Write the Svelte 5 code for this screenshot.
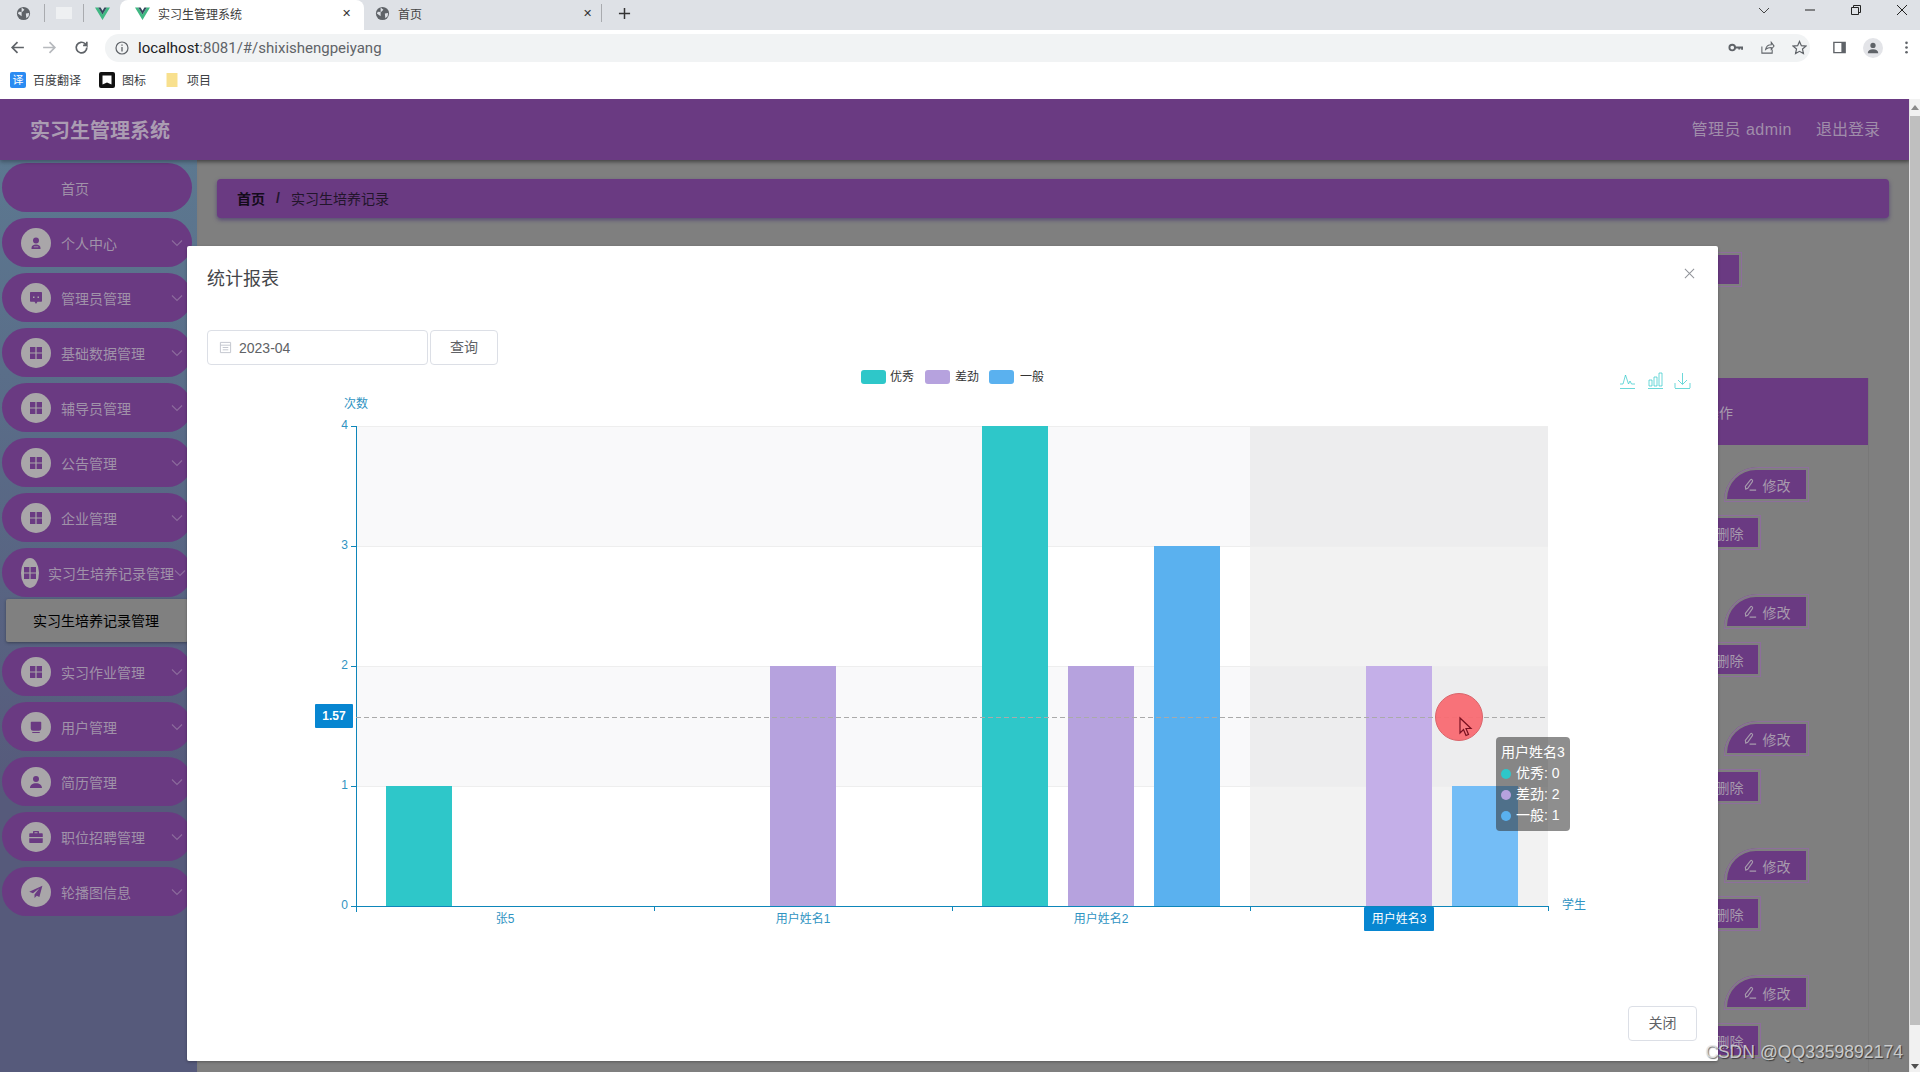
<script lang="ts">
  const navItems = [
    { label: "首页", icon: "" },
    { label: "个人中心", icon: "user" },
    { label: "管理员管理", icon: "chat" },
    { label: "基础数据管理", icon: "grid" },
    { label: "辅导员管理", icon: "grid" },
    { label: "公告管理", icon: "grid" },
    { label: "企业管理", icon: "grid" },
    { label: "实习生培养记录管理", icon: "grid", open: true, sub: "实习生培养记录管理" },
    { label: "实习作业管理", icon: "grid" },
    { label: "用户管理", icon: "cup" },
    { label: "简历管理", icon: "person" },
    { label: "职位招聘管理", icon: "case" },
    { label: "轮播图信息", icon: "plane" }
  ];

  const iconPaths = {
    user: "M12 4.5a4 4 0 1 1 0 8 4 4 0 0 1 0-8zM6 20v-1.5c0-2.6 2.4-4.5 6-4.5s6 1.9 6 4.5V20zM9 17.5h6v-1H9z",
    chat: "M5 4h14a1 1 0 0 1 1 1v11a1 1 0 0 1-1 1h-5l-2 3-2-3H5a1 1 0 0 1-1-1V5a1 1 0 0 1 1-1zM8 10v2h2v-2zM14 10v2h2v-2z",
    grid: "M4 4h7.200v7.200H4zM12.800 4H20v7.200h-7.200zM4 12.800h7.200V20H4zM12.800 12.800H20V20h-7.200z",
    cup: "M6 5h12a1 1 0 0 1 1 1v8a3 3 0 0 1-3 3H8a3 3 0 0 1-3-3V6a1 1 0 0 1 1-1zM7 18.5h10V20H7z",
    person: "M12 4a4 4 0 1 1 0 8 4 4 0 0 1 0-8zM4 20c0-4 3.5-6.5 8-6.5s8 2.500 8 6.500z",
    case: "M9 4h6a1 1 0 0 1 1 1v2h4a1 1 0 0 1 1 1v4H3V8a1 1 0 0 1 1-1h4V5a1 1 0 0 1 1-1zM10 5.500V7h4V5.500zM3 13.500h18V19a1 1 0 0 1-1 1H4a1 1 0 0 1-1-1z",
    plane: "M20.500 3.500 3 11.500l5 2.200 8.500-6.700-6.500 8.200V20l3-3 3.500 1.600z"
  };

  // data of the bar chart, in the same units as the y axis
  const categories = ["张5", "用户姓名1", "用户姓名2", "用户姓名3"];
  const series = [
    { name: "优秀", color: "#2ec7c9", hover: "#2ec7c9", values: [1, 0, 4, 0] },
    { name: "差劲", color: "#b6a2de", hover: "#c4afe8", values: [0, 2, 2, 2] },
    { name: "一般", color: "#5ab1ef", hover: "#74bdf6", values: [0, 0, 3, 1] }
  ];
  const activeIndex = 3;
  const axisX = 356;
  const axisEnd = 1548;
  const zeroY = 906;
  const unit = 120;
  const catWidth = (axisEnd - axisX) / categories.length;
  const bars = series.flatMap((s, si) =>
    s.values.map((v, i) => ({
      x: axisX + catWidth * (i + 0.5) + (si - 1) * 86 - 33,
      y: zeroY - v * unit,
      h: v * unit,
      fill: i === activeIndex ? s.hover : s.color
    })).filter((b) => b.h > 0)
  );
  const tooltipRows = [
    { name: "优秀", value: 0, color: "#2ec7c9" },
    { name: "差劲", value: 2, color: "#b6a2de" },
    { name: "一般", value: 1, color: "#5ab1ef" }
  ];
  const rows = [0, 1, 2, 3, 4];
</script>

{#snippet globe()}
  <svg class="fav" viewBox="0 0 16 16"><circle cx="8" cy="8" r="7" fill="#5f6368" /><path d="M6 1.500 9 4 6.500 6.500 3 6l-1 2 4 3v3.500M10.500 8l3.500-.5-.5 3.500-2.500 2z" fill="#dee1e6" /></svg>
{/snippet}
{#snippet vue()}
  <svg class="fav" viewBox="0 0 16 16"><path d="M0 1.500h3.500L8 9l4.500-7.500H16L8 15z" fill="#41b883" /><path d="M3.500 1.500h2.500L8 5l2-3.500h2.500L8 9z" fill="#35495e" /></svg>
{/snippet}
{#snippet pencil()}
  <svg class="pen" viewBox="0 0 16 16"><path d="M3 13 2.500 10 8 3c1-1 3 .5 2 2L5 12zM7 14h7" fill="none" stroke="#a79bad" stroke-width="1.200" /></svg>
{/snippet}

<div class="browser">
  <div class="tabs">
    <div class="pinned first">{@render globe()}</div>
    <div class="pinned sep"><span class="blank"></span></div>
    <div class="pinned sep last">{@render vue()}</div>
    <div class="tab active">
      {@render vue()}
      <span class="tab-title">实习生管理系统</span>
      <span class="tab-x">✕</span>
    </div>
    <div class="tab second">
      {@render globe()}
      <span class="tab-title">首页</span>
      <span class="tab-x">✕</span>
    </div>
    <svg class="plus" viewBox="0 0 14 14"><path d="M7 1v12M1 7h12" stroke="#333" stroke-width="1.600" /></svg>
    <div class="win">
      <svg viewBox="0 0 12 12"><path d="M1 4l5 5 5-5" fill="none" stroke="#444" /></svg>
      <svg viewBox="0 0 12 12"><path d="M1 6h10" stroke="#222" /></svg>
      <svg viewBox="0 0 12 12"><path d="M1.500 3.500h7v7h-7zM3.500 3.500v-2h7v7h-2" fill="none" stroke="#222" /></svg>
      <svg viewBox="0 0 12 12"><path d="M1 1l10 10M11 1 1 11" stroke="#222" /></svg>
    </div>
  </div>

  <div class="toolbar">
    <svg class="nav-ico" viewBox="0 0 16 16"><path d="M14 8H3M8 3 3 8l5 5" fill="none" stroke="#5f6368" stroke-width="1.600" /></svg>
    <svg class="nav-ico" viewBox="0 0 16 16"><path d="M2 8h11M8 3l5 5-5 5" fill="none" stroke="#b6b9bd" stroke-width="1.600" /></svg>
    <svg class="nav-ico" viewBox="0 0 16 16"><path d="M13 8a5 5 0 1 1-1.500-3.500L13 6V2.500M13 6H9.500" fill="none" stroke="#5f6368" stroke-width="1.600" /></svg>
    <div class="omnibox">
      <svg class="info" viewBox="0 0 14 14"><circle cx="7" cy="7" r="6" fill="none" stroke="#5f6368" stroke-width="1.200" /><path d="M7 6v4.500M7 3.500v1.300" stroke="#5f6368" stroke-width="1.300" /></svg>
      <span class="url"><b>localhost</b>:8081/#/shixishengpeiyang</span>
      <div class="omni-right">
        <svg viewBox="0 0 16 16"><circle cx="4.500" cy="8" r="3" fill="none" stroke="#5f6368" stroke-width="2" /><path d="M7.500 8H15v2.500M12 8v2" fill="none" stroke="#5f6368" stroke-width="2" /></svg>
        <svg viewBox="0 0 16 16"><path d="M2 7v7h11V10M6 10c.5-3 3-5 6-5V2.500L15 6.500 12 10V8c-2.500 0-4.500.5-6 2z" fill="none" stroke="#5f6368" stroke-width="1.100" /></svg>
        <svg viewBox="0 0 16 16"><path d="M8 1.500l2 4.500 4.800.5-3.600 3.200 1 4.800L8 12.100l-4.200 2.400 1-4.800L1.200 6.500 6 6z" fill="none" stroke="#5f6368" stroke-width="1.300" /></svg>
      </div>
    </div>
    <div class="tool-right">
      <svg viewBox="0 0 16 16"><path d="M2 2.500h12v11H2z" fill="none" stroke="#5f6368" stroke-width="1.500" /><path d="M10 2.500h4v11h-4z" fill="#5f6368" /></svg>
      <span class="avatar"><svg viewBox="0 0 16 16"><circle cx="8" cy="5" r="3" fill="#5f6368" /><path d="M2 14c0-3 2.500-4.500 6-4.500s6 1.500 6 4.500z" fill="#5f6368" /></svg></span>
      <svg viewBox="0 0 16 16"><circle cx="8" cy="3" r="1.400" fill="#5f6368" /><circle cx="8" cy="8" r="1.400" fill="#5f6368" /><circle cx="8" cy="13" r="1.400" fill="#5f6368" /></svg>
    </div>
  </div>

  <div class="bookmarks">
    <span class="bm"><span class="bm-fanyi">译</span>百度翻译</span>
    <span class="bm"><svg class="bm-ico" viewBox="0 0 16 16"><rect width="16" height="16" rx="2" fill="#111" /><path d="M3.500 3.500h9v9L8 10.500l-4.500 2z" fill="#fff" /></svg>图标</span>
    <span class="bm"><svg class="bm-ico" viewBox="0 0 16 16"><path d="M2.500 1h11v14h-11z" fill="#f8e08e" /></svg>项目</span>
  </div>
</div>

<div class="page">
  <div class="app">
    <header class="topbar">
      <span class="logo">实习生管理系统</span>
      <div class="user">
        <span class="who">管理员 admin</span>
        <span>退出登录</span>
      </div>
    </header>

    <div class="body">
      <aside class="sidebar">
        {#each navItems as item}
          <div class="nav-item" class:open={item.open}>
            {#if item.icon}
              <span class="nav-icon">
                <svg viewBox="0 0 24 24"><path d={iconPaths[item.icon]} fill="#6a3a82" fill-rule="evenodd" /></svg>
              </span>
            {:else}
              <span class="nav-icon none"></span>
            {/if}
            <span class="nav-label">{item.label}</span>
            {#if item.icon}
              <svg class="chev" viewBox="0 0 12 8"><path d="M1 1.500l5 5 5-5" fill="none" stroke="#8b6a9c" stroke-width="1.200" /></svg>
            {/if}
          </div>
          {#if item.sub}
            <div class="nav-sub">{item.sub}</div>
          {/if}
        {/each}
      </aside>

      <main class="main">
        <nav class="crumb">
          <b>首页</b>
          <span class="slash">/</span>
          <span>实习生培养记录</span>
        </nav>
        <div class="actions"><span class="act-btn plain"></span></div>
        <div class="table">
          <div class="thead"><span class="th-op">操作</span></div>
          {#each rows as r (r)}
            <div class="row">
              <span class="act-btn edit">{@render pencil()}修改</span>
              <span class="act-btn del">删除</span>
            </div>
          {/each}
        </div>
      </main>
    </div>
  </div>

  <div class="scrollbar">
    <svg class="arrow up" viewBox="0 0 8 5"><path d="M0 5h8L4 0z" fill="#8a8a8a" /></svg>
    <div class="thumb"></div>
    <svg class="arrow" viewBox="0 0 8 5"><path d="M0 0h8L4 5z" fill="#505050" /></svg>
  </div>

  <section class="dialog">
    <div class="dialog-head">
      <span class="dialog-title">统计报表</span>
      <svg class="dialog-x" viewBox="0 0 12 12"><path d="M1 1l10 10M11 1 1 11" stroke="#909399" stroke-width="1.100" /></svg>
    </div>

    <div class="query">
      <div class="date-input">
        <svg viewBox="0 0 14 14"><path d="M1.500 1.500h11v11h-11zM1.500 4.500h11M4 7h6M4 9.500h6" fill="none" stroke="#c0c4cc" /></svg>
        <span>2023-04</span>
      </div>
      <button class="btn">查询</button>
    </div>

    <div class="chart">
      <svg class="plot" viewBox="187 365 1531 622" width="1531" height="622">
        <!-- legend -->
        <rect x="861" y="370" width="25" height="14" rx="3" fill="#2ec7c9" />
        <text x="890" y="381" class="legend">优秀</text>
        <rect x="925" y="370" width="25" height="14" rx="3" fill="#b6a2de" />
        <text x="955" y="381" class="legend">差劲</text>
        <rect x="989" y="370" width="25" height="14" rx="3" fill="#5ab1ef" />
        <text x="1020" y="381" class="legend">一般</text>

        <!-- toolbox -->
        <g fill="none" stroke="#2ec7c9" stroke-opacity="0.7" stroke-width="1">
          <path d="M1620 388.500h15M1620 384h3l2.500-9 3 9 1.500-3 1.500 3h3.500" />
          <path d="M1648 388.500h15M1649 380h3v6h-3zM1654 377h3v9h-3zM1659 373h3v13h-3z" />
          <path d="M1675 388.500h15M1675 383v5M1690 383v5M1682.500 373v11M1678 380l4.500 4.500 4.500-4.500" />
        </g>

        <!-- split areas and lines -->
        <rect x={axisX} y="426" width={axisEnd - axisX} height="120" fill="#f9f9fa" />
        <rect x={axisX} y="666" width={axisEnd - axisX} height="120" fill="#f9f9fa" />
        <rect x="1250" y="426" width="298" height="480" fill="#c8c8c8" fill-opacity="0.24" />
        {#each [4, 3, 2, 1] as v}
          <line x1={axisX} x2={axisEnd} y1={zeroY - v * unit + 0.5} y2={zeroY - v * unit + 0.5} stroke="#eeeeee" />
        {/each}

        <!-- bars -->
        {#each bars as b}
          <rect x={b.x} y={b.y} width="66" height={b.h} fill={b.fill} />
        {/each}

        <!-- axes -->
        <path d="M356.500 426v486M351 426.500h6M351 546.500h6M351 666.500h6M351 786.500h6M351 906.500h6" stroke="#0e86ba" fill="none" />
        <path d="M356 906.500h1192.500M654.500 906v5M952.500 906v5M1250.500 906v5M1548.500 906v5" stroke="#0e86ba" fill="none" />
        {#each [4, 3, 2, 1, 0] as v}
          <text x="348" y={zeroY - v * unit + 3} text-anchor="end" class="tick">{v}</text>
        {/each}
        <text x="356" y="408" text-anchor="middle" class="tick">次数</text>
        <text x="1562" y="909" class="tick">学生</text>
        {#each categories as c, i}
          {#if i !== activeIndex}
            <text x={axisX + catWidth * (i + 0.5)} y="923" text-anchor="middle" class="tick">{c}</text>
          {/if}
        {/each}

        <!-- crosshair -->
        <line x1="356" x2="1548" y1="717.500" y2="717.500" stroke="#aaaaaa" stroke-dasharray="5 3" />
        <rect x="315" y="704" width="38" height="24" rx="1" fill="#0786d1" />
        <text x="334" y="720" text-anchor="middle" class="pointer bold">1.57</text>
        <rect x="1364" y="907" width="70" height="24" rx="1" fill="#0786d1" />
        <text x="1399" y="923" text-anchor="middle" class="pointer">用户姓名3</text>

        <!-- click marker of the screen recorder -->
        <circle cx="1459" cy="717" r="23.500" fill="#f96c72" fill-opacity="0.95" stroke="#d9656b" />
        <path d="M1460 718v15l3.500-3.500 2.500 6 2.500-1-2.500-6h5z" fill="#f87a80" stroke="#7a1020" stroke-width="1.200" />
      </svg>

      <div class="tooltip">
        <div>用户姓名3</div>
        {#each tooltipRows as t}
          <div class="tip-row"><span class="dot" style="background: {t.color}"></span>{t.name}: {t.value}</div>
        {/each}
      </div>
    </div>

    <div class="dialog-foot">
      <button class="btn close">关闭</button>
    </div>
  </section>

  <span class="watermark">CSDN @QQ3359892174</span>
</div>

<style>
  :global(body) {
    margin: 0;
    overflow: hidden;
    font-family: "Liberation Sans", "Noto Sans CJK SC", sans-serif;
  }

  /* browser chrome */
  .browser {
    height: 99px;
    background: #fff;
    display: flex;
    flex-direction: column;
  }

  .tabs {
    height: 30px;
    background: #dee1e6;
    display: flex;
    align-items: center;
  }

  .fav {
    width: 15px;
    height: 15px;
    flex: none;
  }

  .pinned {
    width: 39px;
    height: 18px;
    margin-bottom: 4px;
    display: flex;
    align-items: center;
    justify-content: center;
    box-sizing: border-box;
  }

  .pinned.first {
    width: 44px;
    padding-left: 2px;
  }

  .pinned.last {
    width: 37px;
  }

  .pinned.sep {
    border-left: 1px solid #a9abaf;
  }

  .blank {
    width: 16px;
    height: 12px;
    background: #eef0f2;
  }

  .tab {
    display: flex;
    align-items: center;
    font-size: 12px;
    color: #444;
    box-sizing: border-box;
  }

  .tab.active {
    width: 244px;
    height: 30px;
    padding: 0 13px 4px 15px;
    background: #fff;
    border-radius: 8px 8px 0 0;
    color: #3c3c3c;
  }

  .tab.second {
    width: 238px;
    height: 18px;
    margin-bottom: 4px;
    padding: 0 9px 0 11px;
    border-right: 1px solid #a9abaf;
  }

  .tab-title {
    margin-left: 8px;
    flex: 1;
  }

  .tab-x {
    font-size: 11px;
    color: #333;
  }

  .plus {
    width: 13px;
    height: 13px;
    margin: 0 0 4px 16px;
  }

  .win {
    margin: 0 0 10px auto;
    display: flex;
    align-items: center;
    gap: 34px;
    padding-right: 12px;
  }

  .win svg {
    width: 12px;
    height: 12px;
  }

  .toolbar {
    height: 35px;
    display: flex;
    align-items: center;
    padding-left: 9px;
    gap: 15px;
  }

  .nav-ico {
    width: 17px;
    height: 17px;
    flex: none;
  }

  .omnibox {
    width: 1705px;
    height: 28px;
    background: #f1f3f4;
    border-radius: 14px;
    display: flex;
    align-items: center;
    padding: 0 3px 0 10px;
    box-sizing: border-box;
  }

  .info {
    width: 14px;
    height: 14px;
  }

  .url {
    margin-left: 9px;
    font-size: 15px;
    color: #5f6368;
    font-family: Roboto, "Liberation Sans", sans-serif;
  }

  .url b {
    font-weight: 400;
    color: #202124;
  }

  .omni-right {
    margin-left: auto;
    display: flex;
    gap: 17px;
  }

  .omni-right svg {
    width: 15px;
    height: 15px;
  }

  .tool-right {
    display: flex;
    align-items: center;
    gap: 16px;
    margin-left: 7px;
  }

  .tool-right > svg {
    width: 15px;
    height: 15px;
  }

  .avatar {
    width: 20px;
    height: 20px;
    border-radius: 50%;
    background: #e3e4e8;
    display: flex;
    align-items: center;
    justify-content: center;
  }

  .avatar svg {
    width: 14px;
    height: 14px;
  }

  .bookmarks {
    flex: 1;
    display: flex;
    align-items: center;
    padding: 0 0 5px 10px;
    gap: 18px;
    font-size: 12px;
    color: #3c4043;
  }

  .bm {
    display: flex;
    align-items: center;
    gap: 7px;
  }

  .bm-fanyi {
    width: 16px;
    height: 16px;
    background: #2a8bf2;
    color: #fff;
    border-radius: 2px;
    font-size: 11px;
    line-height: 16px;
    text-align: center;
  }

  .bm-ico {
    width: 16px;
    height: 16px;
  }

  /* dimmed page below the dialog */
  .page {
    position: relative;
    height: 973px;
    display: flex;
    overflow: hidden;
    background: #7f7f7f;
  }

  .app {
    flex: 1;
    min-width: 0;
    display: flex;
    flex-direction: column;
  }

  .topbar {
    height: 61px;
    flex: none;
    background: #6a3a82;
    box-shadow: 0 2px 4px rgba(0, 0, 0, 0.3);
    display: flex;
    align-items: center;
    justify-content: space-between;
    padding: 0 29px 0 30px;
    position: relative;
  }

  .logo {
    font-size: 20px;
    font-weight: 700;
    color: #ab9cb2;
  }

  .user {
    display: flex;
    gap: 24px;
    padding-bottom: 3px;
    font-size: 16px;
    color: #a08daa;
  }

  .who {
    letter-spacing: 0.5px;
  }

  .body {
    flex: 1;
    display: flex;
    min-height: 0;
  }

  .sidebar {
    width: 197px;
    flex: none;
    box-sizing: border-box;
    padding: 3px 5px 0 2px;
    background: linear-gradient(#5c7890, #565a7b 70%);
  }

  .nav-item {
    height: 49px;
    margin-bottom: 6px;
    padding: 0 9px 0 19px;
    border-radius: 25px;
    background: #6a3a82;
    display: flex;
    align-items: center;
    font-size: 14px;
    color: #a092a9;
  }

  .nav-icon {
    flex: 0 1 30px;
    min-width: 0;
    height: 30px;
    border-radius: 50%;
    background: #a9a6a9;
    display: flex;
    align-items: center;
    justify-content: center;
    overflow: hidden;
  }

  .nav-icon.none {
    background: none;
  }

  .nav-icon svg {
    width: 18px;
    height: 18px;
    flex: none;
  }

  .nav-label {
    flex: none;
    margin-left: 10px;
    white-space: nowrap;
  }

  .chev {
    width: 12px;
    height: 8px;
    flex: none;
    margin-left: auto;
  }

  .nav-item.open {
    margin-bottom: 2px;
    padding-right: 6px;
  }

  .nav-item.open .nav-label {
    margin-left: 9px;
  }

  .nav-sub {
    height: 43px;
    margin: 0 4px 5px 4px;
    background: #808080;
    box-shadow: 0 1px 3px rgba(0, 0, 0, 0.35);
    border-radius: 2px;
    font-size: 14px;
    line-height: 45px;
    text-align: center;
    text-indent: -2px;
    color: #000;
  }

  .main {
    flex: 1;
    min-width: 0;
    padding: 19px 20px 0 20px;
    background: #7f7f7f;
    box-shadow: inset 0 4px 4px -3px rgba(0, 0, 0, 0.3);
  }

  .crumb {
    height: 39px;
    padding: 0 0 2px 20px;
    box-sizing: border-box;
    background: #6a3a82;
    border-radius: 4px;
    box-shadow: 0 2px 4px rgba(60, 40, 110, 0.6);
    display: flex;
    align-items: center;
    font-size: 14px;
    color: #22152b;
  }

  .crumb b {
    color: #140b1a;
  }

  .slash {
    margin: 0 11px;
    font-weight: 700;
  }

  .actions {
    height: 35px;
    margin: 34px 147px 0 0;
    display: flex;
    justify-content: flex-end;
  }

  .act-btn {
    width: 85px;
    height: 35px;
    box-sizing: border-box;
    display: flex;
    align-items: center;
    justify-content: center;
    gap: 5px;
    background: #6a3a82;
    font-size: 14px;
    color: #a79bad;
    box-shadow: inset 0 0 0 1px #8d6e9c, inset 0 0 0 3px #7f7f7f;
    border-radius: 34px 0 0 0;
  }

  .act-btn.plain {
    border-radius: 0;
  }

  .pen {
    width: 15px;
    height: 15px;
  }

  .table {
    margin: 91px 20px 0 0;
    border-right: 1px solid #787878;
  }

  .thead {
    height: 67px;
    background: #6a3a82;
    display: flex;
    align-items: center;
    justify-content: flex-end;
    font-size: 14px;
    color: #a79bad;
  }

  .th-op {
    margin-right: 135px;
  }

  .row {
    height: 127px;
    box-sizing: border-box;
    padding: 22px 59px 0 0;
    display: flex;
    flex-direction: column;
    align-items: flex-end;
    gap: 13px;
  }

  .row .del {
    margin-right: 48px;
    padding-left: 22px;
  }

  .scrollbar {
    width: 11px;
    flex: none;
    background: #f1f1f1;
    border-left: 1px solid #e6e6e6;
    box-sizing: border-box;
    position: relative;
    padding-top: 17px;
  }

  .thumb {
    height: 909px;
    background: #bfbfbf;
  }

  .arrow {
    position: absolute;
    left: 1px;
    bottom: 3px;
    width: 8px;
    height: 5px;
  }

  .arrow.up {
    top: 6px;
    bottom: auto;
  }

  /* statistics dialog */
  .dialog {
    position: absolute;
    left: 187px;
    top: 147px;
    width: 1531px;
    height: 815px;
    background: #fff;
    border-radius: 2px;
    box-shadow: 0 1px 3px rgba(0, 0, 0, 0.3);
    display: flex;
    flex-direction: column;
  }

  .dialog-head {
    height: 84px;
    flex: none;
    padding: 21px 20px 0;
    box-sizing: border-box;
    position: relative;
  }

  .dialog-title {
    font-size: 18px;
    line-height: 24px;
    color: #44464a;
  }

  .dialog-x {
    position: absolute;
    right: 23px;
    top: 22px;
    width: 11px;
    height: 11px;
  }

  .query {
    height: 35px;
    flex: none;
    padding-left: 20px;
    display: flex;
    gap: 2px;
  }

  .date-input {
    width: 221px;
    box-sizing: border-box;
    border: 1px solid #dcdfe6;
    border-radius: 4px;
    padding-left: 11px;
    display: flex;
    align-items: center;
    gap: 7px;
    font-size: 14px;
    color: #606266;
  }

  .date-input svg {
    width: 13px;
    height: 13px;
  }

  .btn {
    width: 68px;
    height: 35px;
    padding: 0 0 3px;
    background: #fff;
    border: 1px solid #dcdfe6;
    border-radius: 4px;
    font-family: inherit;
    font-size: 14px;
    color: #606266;
  }

  .chart {
    position: relative;
    height: 622px;
    flex: none;
  }

  .plot {
    display: block;
    font-family: "Liberation Sans", "Noto Sans CJK SC", sans-serif;
    font-size: 12px;
  }

  .legend {
    fill: #333;
  }

  .tick {
    fill: #2f93c2;
  }

  .pointer {
    fill: #fff;
  }

  .bold {
    font-weight: 700;
  }

  .tooltip {
    position: absolute;
    left: 1309px;
    top: 372px;
    width: 74px;
    height: 94px;
    box-sizing: border-box;
    padding: 5px 5px;
    background: rgba(50, 50, 50, 0.55);
    border-radius: 4px;
    font-size: 14px;
    line-height: 21px;
    color: #fff;
    white-space: nowrap;
  }

  .tip-row {
    display: flex;
    align-items: center;
  }

  .dot {
    width: 10px;
    height: 10px;
    border-radius: 50%;
    margin-right: 5px;
    flex: none;
  }

  .dialog-foot {
    flex: 1;
    display: flex;
    justify-content: flex-end;
    align-items: flex-start;
    padding: 19px 21px 0 0;
  }

  .btn.close {
    width: 69px;
  }

  .watermark {
    position: absolute;
    right: 17px;
    bottom: 10px;
    font-size: 17.600px;
    line-height: 20px;
    color: rgba(230, 230, 230, 0.8);
    text-shadow: 1px 1px 1px rgba(0, 0, 0, 0.55);
  }
</style>
